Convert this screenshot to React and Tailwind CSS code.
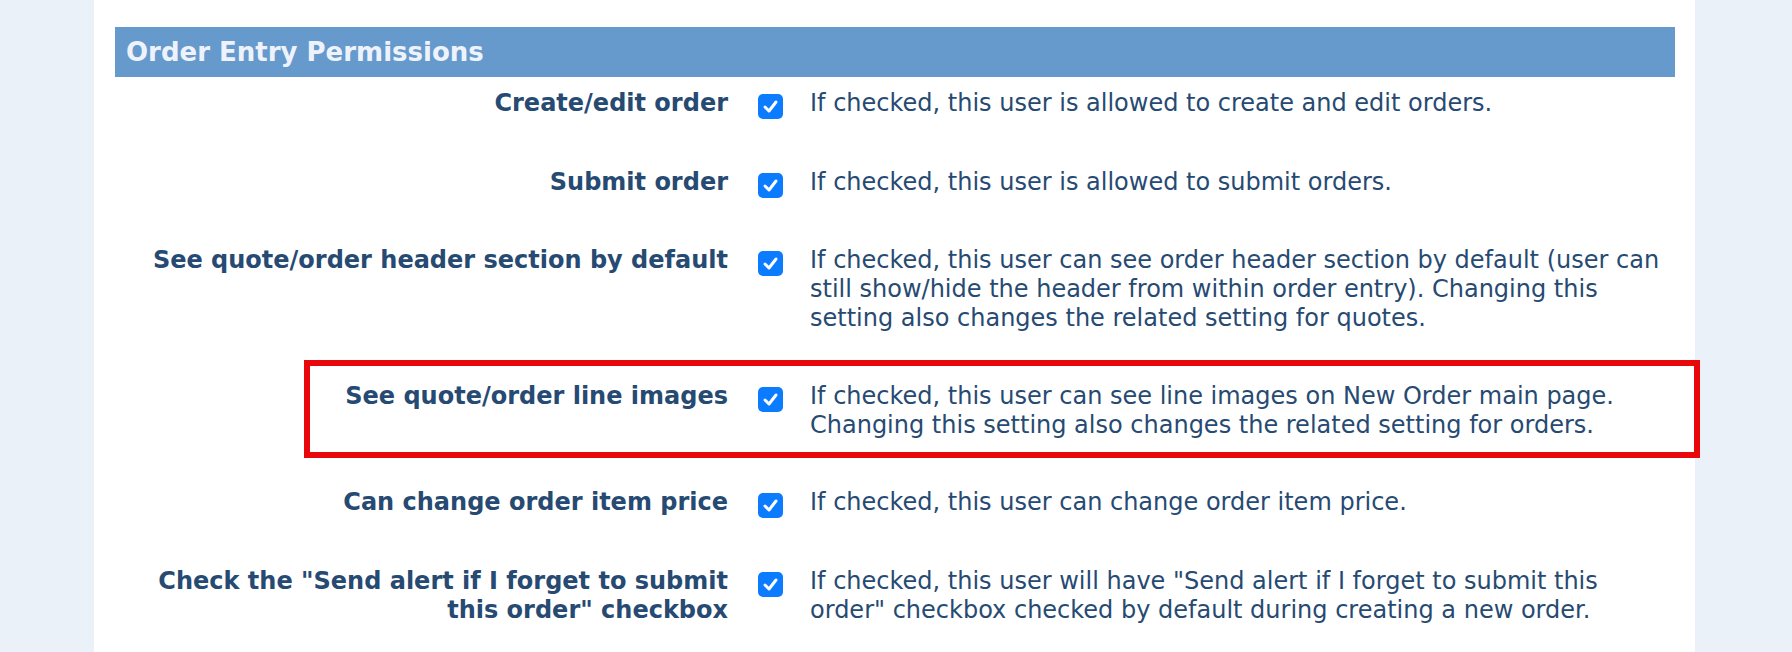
import React from "react";

const rows = [
  {
    label: "Create/edit order",
    text: "If checked, this user is allowed to create and edit orders.",
  },
  {
    label: "Submit order",
    text: "If checked, this user is allowed to submit orders.",
  },
  {
    label: "See quote/order header section by default",
    text: "If checked, this user can see order header section by default (user can still show/hide the header from within order entry). Changing this setting also changes the related setting for quotes.",
  },
  {
    label: "See quote/order line images",
    text: "If checked, this user can see line images on New Order main page. Changing this setting also changes the related setting for orders.",
    highlight: true,
  },
  {
    label: "Can change order item price",
    text: "If checked, this user can change order item price.",
  },
  {
    label: 'Check the "Send alert if I forget to submit this order" checkbox',
    text: 'If checked, this user will have "Send alert if I forget to submit this order" checkbox checked by default during creating a new order.',
  },
];

function CheckBox() {
  return (
    <span className="ml-[30px] mt-[5px] flex h-[25px] w-[25px] shrink-0 items-center justify-center rounded-[5px] bg-[#0b7bff]">
      <svg width="17" height="17" viewBox="0 0 17 17" fill="none">
        <polyline
          points="3,9 7,13 14,4"
          stroke="white"
          strokeWidth="3"
          strokeLinecap="round"
          strokeLinejoin="round"
        />
      </svg>
    </span>
  );
}

export default function App() {
  return (
    <div className="flex h-[652px] w-[1792px] overflow-hidden bg-[#eaf1f9] font-['DejaVu_Sans',sans-serif] text-[#264a72]">
      <div className="ml-[94px] w-[1601px] bg-white pl-[21px] pr-[20px] pt-[27px]">
        <div className="h-[50px] bg-[#6699cc] pl-[11px] text-[26px] font-bold leading-[50px] text-[#eef3fb]">
          Order Entry Permissions
        </div>
        <div className="flex flex-col gap-[48.5px] pt-[12px]">
          {rows.map((row) => (
            <div key={row.label} className="relative flex text-[24px] leading-[29px]">
              <div className="w-[613px] shrink-0 text-right font-bold">{row.label}</div>
              <CheckBox />
              <div className="ml-[27px] w-[865px]">{row.text}</div>
              {row.highlight && (
                <div className="absolute left-[189px] top-[-22px] h-[98px] w-[1396px] border-[6px] border-[#e8070b]" />
              )}
            </div>
          ))}
        </div>
      </div>
    </div>
  );
}
